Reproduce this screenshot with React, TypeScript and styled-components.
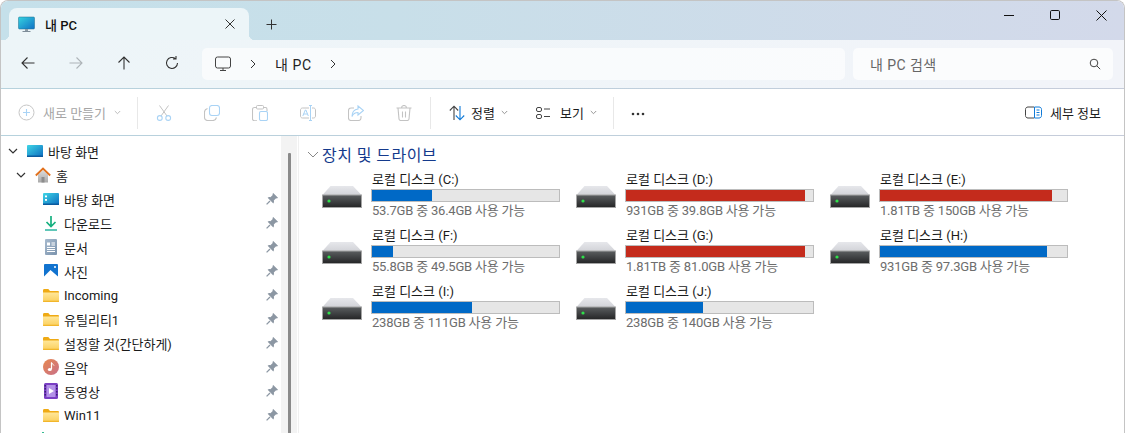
import React from "react";
import styled, { createGlobalStyle } from "styled-components";

const Global = createGlobalStyle`
  html, body { margin: 0; padding: 0; background: #fff; overflow: hidden; }
  body { font-family: Roboto, "Noto Sans CJK KR", sans-serif; color: #1a1a1a; }
`;

const Window = styled.div`
  width: 1125px; height: 433px; box-sizing: border-box; overflow: hidden;
  display: flex; flex-direction: column;
  border: 1px solid #c4c4c4; border-bottom: 0; border-radius: 8px 8px 0 0;
  background: #fff;
`;
const TitleBar = styled.div`
  height: 39px; flex: none; display: flex; align-items: flex-end;
  background: linear-gradient(90deg, #c5e0ea 0%, #c8dfe9 35%, #d3d9ea 100%);
  padding-left: 8px;
`;
const Tab = styled.div`
  position: relative; width: 240px; height: 32px; box-sizing: border-box;
  display: flex; align-items: center; padding: 0 14px 0 9px;
  background: #ecf5f8; border-radius: 8px 8px 0 0;
  &::before, &::after {
    content: ""; position: absolute; bottom: 0; width: 6px; height: 6px;
  }
  &::before { left: -6px; background: radial-gradient(circle at 0 0, transparent 6px, #ecf5f8 6.5px); }
  &::after { right: -6px; background: radial-gradient(circle at 100% 0, transparent 6px, #ecf5f8 6.5px); }
`;
const TabLabel = styled.span`
  margin-left: 10px; flex: 1; font-size: 13px; font-weight: 500; color: #111;
`;
const NewTab = styled.div`
  width: 44px; display: flex; justify-content: center; align-items: center;
  height: 32px; margin-right: auto;
`;
const Controls = styled.div`
  align-self: flex-start; display: flex; margin-left: auto;
`;
const Control = styled.div`
  width: 46px; height: 28px; display: flex; align-items: center; justify-content: center;
`;
const AddressRow = styled.div`
  height: 49px; flex: none; box-sizing: border-box; display: flex; align-items: center;
  background: linear-gradient(90deg, #edf5f8, #f2f4f9);
  border-bottom: 1px solid;
  border-image: linear-gradient(90deg, #b6d2dd, #c6ccda) 1;
  padding: 0 11px 0 3px;
`;
const NavBtn = styled.div`
  width: 48px; height: 30px; margin-bottom: 2px; flex: none; display: flex; align-items: center; justify-content: center;
`;
const AddressBox = styled.div`
  width: 643px; height: 32px; margin-left: 6px; flex: none; box-sizing: border-box;
  display: flex; align-items: center; padding-left: 13px;
  background: rgba(255,255,255,.62); border-radius: 5px;
`;
const CrumbIcon = styled.span`
  display: flex; margin-right: 17px;
`;
const Crumb = styled.span`
  font-size: 14px; color: #222; margin: 0 16px 0 17px; letter-spacing: .6px;
`;
const SearchBox = styled.div`
  width: 260px; height: 32px; margin-left: 8px; flex: none; box-sizing: border-box;
  display: flex; align-items: center; justify-content: space-between;
  padding: 0 12px 0 17px;
  background: rgba(255,255,255,.68); border-radius: 5px;
  font-size: 14px; color: #666; letter-spacing: .45px;
`;
const CommandBar = styled.div`
  height: 47px; flex: none; box-sizing: border-box; display: flex; align-items: center;
  background: #fff; border-bottom: 1px solid;
  border-image: linear-gradient(90deg, #b6d2dd, #c6ccda) 1;
  padding: 1px 23px 0 17px;
`;
const NewBtn = styled.div`
  width: 119px; flex: none; display: flex; align-items: center; gap: 8px;
  font-size: 13px; color: #a5a5a5;
`;
const Sep = styled.div`
  width: 1px; height: 32px; background: #e8e8e8; flex: none;
`;
const ToolIcons = styled.div`
  display: flex; margin: 0 2px 0 2px; flex: none;
`;
const ToolIcon = styled.div`
  width: 48px; height: 32px; display: flex; align-items: center; justify-content: center;
`;
const Menu = styled.div<{ $w: number; $pl: number; $iconGap: number }>`
  width: ${p => p.$w}px; padding-left: ${p => p.$pl}px; box-sizing: border-box; flex: none;
  display: flex; align-items: center; gap: 6px; font-size: 13px; color: #1c1c1c;
  & > svg:first-child { margin-right: ${p => p.$iconGap}px; }
`;
const Details = styled.div`
  margin-left: auto; display: flex; align-items: center; gap: 8px;
  font-size: 13px; color: #1c1c1c;
`;
const Body = styled.div`
  flex: 1; min-height: 0; display: flex; overflow: hidden;
`;
const Tree = styled.div`
  width: 280px; flex: none; padding-top: 3px; overflow: hidden;
`;
const Row = styled.div<{ $indent: number }>`
  height: 24px; display: flex; align-items: center; padding-left: ${p => p.$indent}px;
  font-size: 13px; color: #1a1a1a; white-space: nowrap; position: relative;
`;
const Chev = styled.span`
  width: 14px; flex: none; display: flex; align-items: center; justify-content: center; margin-right: 7px;
`;
const IconBox = styled.span`
  width: 16px; height: 16px; flex: none; display: flex; margin-right: 5px;
`;
const Pin = styled.span`
  position: absolute; left: 265px; top: 6px; width: 12px; height: 12px; display: flex;
`;
const Track = styled.div`
  width: 16px; flex: none; background: #f3f3f3; padding: 17px 0 0 7px; box-sizing: border-box;
`;
const Thumb = styled.div`
  width: 2.5px; height: 300px; background: #8a8a8a; border-radius: 1px;
`;
const Divider = styled.div`
  width: 1px; flex: none; margin-left: 1px; background: #f0f0f0;
`;
const Main = styled.div`
  flex: 1; padding: 8px 0 0 8px; min-width: 0;
`;
const Heading = styled.div`
  height: 19px; display: flex; align-items: center; gap: 3px;
  font-size: 16px; color: #143a8c; letter-spacing: .45px;
  margin-bottom: 8px;
`;
const Grid = styled.div`
  display: grid; grid-template-columns: repeat(3, 254px); grid-auto-rows: 48px; row-gap: 8px;
  padding-left: 15px;
`;
const Tile = styled.div`
  display: flex;
`;
const DriveBox = styled.div`
  width: 40px; height: 22px; margin-top: 15px; flex: none; display: flex;
`;
const DriveText = styled.div`
  margin-left: 9px; width: 189px; flex: none;
`;
const DriveName = styled.div`
  height: 16px; line-height: 18px; font-size: 13px; color: #1a1a1a; margin-bottom: 2px; padding-left: 1px; white-space: nowrap;
`;
const Bar = styled.div`
  height: 13px; box-sizing: border-box; border: 1px solid #bcbcbc; background: #e6e6e6;
`;
const Fill = styled.div<{ $low: boolean }>`
  height: 100%; background: ${p => (p.$low ? "#c42b1c" : "#0069c6")};
`;
const DriveSub = styled.div`
  margin-top: 1px; height: 16px; line-height: 16px; font-size: 13px; color: #6d6d6d; padding-left: 1px;
  white-space: nowrap; letter-spacing: -.2px;
`;

const S = (p: React.SVGProps<SVGSVGElement> & { s?: number }) => {
  const { s = 16, ...r } = p;
  return <svg width={s} height={s} viewBox={`0 0 ${s} ${s}`} fill="none" {...r} />;
};

const Monitor = () => (
  <S s={17} style={{ flex: "none" }}>
    <defs><linearGradient id="mon" x1="0" y1="0" x2="1" y2="1"><stop offset="0" stopColor="#35d3e0" /><stop offset="1" stopColor="#0f70c4" /></linearGradient></defs>
    <rect x=".5" y="1" width="16" height="12" rx="1" fill="url(#mon)" stroke="#1c6c8c" strokeWidth=".5" />
    <path d="M7 13h3v2H7z" fill="#8b9aa5" /><path d="M4.500 15.500h8" stroke="#7d8c98" />
  </S>
);
const Arrow = ({ d, c = "#333" }: { d: string; c?: string }) => (
  <S><path d={d} stroke={c} strokeWidth="1.1" /></S>
);
const Small = ({ d, c = "#333" }: { d: string; c?: string }) => (
  <S s={10}><path d={d} stroke={c} strokeWidth="1" /></S>
);
const Dn = ({ c = "#8a8a8a" }: { c?: string }) => (
  <S s={7} style={{ flex: "none" }}><path d="M.8 2l2.700 2.700L6.200 2" stroke={c} strokeWidth=".9" /></S>
);

const G = "#c3c3c3", B = "#a9d3f5";

const Plus = () => (
  <S s={17} style={{ flex: "none" }}><circle cx="8.500" cy="8.500" r="7.500" stroke="#c6c6c6" /><path d="M8.500 5v7M5 8.500h7" stroke={B} strokeWidth="1.1" /></S>
);
const Cut = () => (
  <S><path d="M3.500 0.500L11 11M12.500 0.500L5 11" stroke={G} /><circle cx="3.800" cy="13" r="2.400" stroke={B} strokeWidth="1.1" /><circle cx="12.200" cy="13" r="2.400" stroke={B} strokeWidth="1.1" /></S>
);
const Copy = () => (
  <S><rect x="5.500" y=".5" width="10" height="10" rx="2.500" stroke={B} strokeWidth="1.1" /><path d="M3.500 3.500C1.800 4 .5 5 .5 7v5.500c0 1.700 1.300 3 3 3H9c2 0 3-1.200 3.500-3" stroke={G} strokeWidth="1.1" /></S>
);
const Paste = () => (
  <S>
    <path d="M4 2.500H2.500c-1 0-2 .8-2 2v9.500c0 1 1 1.700 2 1.700H5M12 2.500h1.500c1 0 1.500.8 1.500 1.800V6" stroke={G} strokeWidth="1.1" />
    <rect x="4.500" y=".5" width="7" height="3.500" rx="1" stroke={G} /><rect x="7.500" y="6.500" width="8" height="9" rx="1.500" stroke={B} strokeWidth="1.1" />
  </S>
);
const Rename = () => (
  <S>
    <path d="M9 3H2.500C1.200 3 .5 4 .5 5v6c0 1.200.8 2 2 2H9M12 3h1.500c1.200 0 2 .8 2 2v6c0 1.200-.8 2-2 2H12" stroke={G} />
    <path d="M2.800 11L5.300 5h.6l2.400 6M3.600 9h3.900" stroke={B} /><path d="M9 .5h3M10.500 .5v15M9 15.500h3" stroke={B} />
  </S>
);
const Share = () => (
  <S>
    <path d="M6 3H3C1.500 3 .5 4 .5 5.500V13c0 1.500 1 2.500 2.500 2.500h7.500c1.500 0 2.500-1 2.500-2.500v-2" stroke={G} strokeWidth="1.1" />
    <path d="M10 1l5.500 4.500L10 10V7.500C7 7.500 5 9 4 11.500c0-4 2-7 6-7.500z" stroke={B} strokeWidth="1.1" />
  </S>
);
const Trash = () => (
  <S>
    <path d="M.5 3h15M5.500 3c0-1.500 1-2.500 2.500-2.500s2.500 1 2.500 2.500M2 3l1 11c.1 1 .8 1.500 1.800 1.500h6.400c1 0 1.700-.5 1.800-1.500l1-11M6.500 6.500v6M9.500 6.500v6" stroke={G} strokeWidth="1.1" />
  </S>
);
const Sort = () => (
  <S style={{ flex: "none" }}>
    <path d="M5 15V1.500M.8 5.500L5 1.200l4.200 4.300" stroke="#444" strokeWidth="1.1" />
    <path d="M11 1v13.500M6.800 10.500l4.200 4.300 4.200-4.300" stroke="#0f7ad8" strokeWidth="1.1" />
  </S>
);
const ViewIc = () => (
  <S style={{ flex: "none" }}>
    <rect x="1.500" y="2.500" width="5" height="4" rx="1.500" stroke="#444" /><rect x="1.500" y="9.500" width="5" height="4" rx="1.500" stroke="#444" />
    <path d="M9 4h6M9 11.500h6" stroke="#444" strokeWidth="1.1" />
  </S>
);
const More = () => (
  <S><circle cx="3" cy="9" r="1.300" fill="#333" /><circle cx="8" cy="9" r="1.300" fill="#333" /><circle cx="13" cy="9" r="1.300" fill="#333" /></S>
);
const Panel = () => (
  <S s={17} style={{ flex: "none" }}>
    <path d="M9 3H3C1.500 3 .5 4 .5 5.500v6C.5 13 1.500 14 3 14h6" stroke="#444" />
    <path d="M9.500 3H14c1.500 0 2.500 1 2.500 2.500v6c0 1.500-1 2.500-2.500 2.500H9.500z" stroke="#0f7ad8" />
    <path d="M11.500 6h3M11.500 8.500h3M11.500 11h3" stroke="#0f7ad8" />
  </S>
);

const DesktopIc = ({ id }: { id: string }) => (
  <S>
    <defs><linearGradient id={id} x1="0" y1="0" x2="1" y2="1"><stop offset="0" stopColor="#3fd6e6" /><stop offset="1" stopColor="#0c6cc0" /></linearGradient></defs>
    <rect x="0" y="2" width="16" height="12" rx="1" fill={`url(#${id})`} />
    <rect x="0" y="12.500" width="16" height="1.500" fill="#0b5a9e" />
    {id === "d2" && <><rect x="2" y="4.500" width="2" height="1.800" fill="#fff" /><rect x="2" y="8" width="2" height="1.800" fill="#fff" /></>}
  </S>
);
const HomeIc = () => (
  <S>
    <defs><linearGradient id="hm" x1="0" y1="0" x2="0" y2="1"><stop offset="0" stopColor="#dcdcdc" /><stop offset="1" stopColor="#a9a9a9" /></linearGradient></defs>
    <path d="M3 7.500L8 3l5 4.500V15.500H3z" fill="url(#hm)" /><rect x="6.500" y="10" width="3" height="5.500" fill="#8d8d8d" />
    <path d="M.8 8.500L8 1.500l7.200 7" stroke="#e2711d" strokeWidth="1.800" />
  </S>
);
const DownIc = () => (
  <S><path d="M8 1v9.500M3.500 7L8 11.500 12.500 7" stroke="#15b07f" strokeWidth="1.700" /><path d="M2 15h12" stroke="#2bb5a0" strokeWidth="1.600" /></S>
);
const DocIc = () => (
  <S>
    <defs><linearGradient id="dc" x1="0" y1="0" x2="1" y2="1"><stop offset="0" stopColor="#a7bace" /><stop offset="1" stopColor="#7b93ad" /></linearGradient></defs>
    <rect x="2" y="0" width="12" height="16" rx="1" fill="url(#dc)" />
    <path d="M4 3.500h3v3H4z" fill="#fff" /><path d="M8.500 4h3.500M8.500 6h3.500M4 8.500h8M4 10.500h8M4 12.500h8" stroke="#fff" />
  </S>
);
const PicIc = () => (
  <S>
    <rect x="1" y="1" width="14" height="14" rx="1" fill="#1173cf" />
    <path d="M1 13.500L7.500 7l7.500 6.500V15H1z" fill="#fff" /><circle cx="12" cy="4" r="1" fill="#fff" />
  </S>
);
const FolderIc = ({ id }: { id: string }) => (
  <S>
    <defs><linearGradient id={id} x1="0" y1="0" x2="0" y2="1"><stop offset="0" stopColor="#ffe79a" /><stop offset="1" stopColor="#fbcf5b" /></linearGradient></defs>
    <path d="M0 3.500C0 2.700.5 2 1.300 2h4l1.700 2h7.700c.8 0 1.300.5 1.300 1.300V6H0z" fill="#efaa14" />
    <path d="M0 5.500h16v8.200c0 .8-.5 1.300-1.300 1.300H1.300C.5 15 0 14.500 0 13.700z" fill={`url(#${id})`} />
    <path d="M0 14.300h16" stroke="#f0b01e" />
  </S>
);
const MusicIc = () => (
  <S>
    <defs><linearGradient id="ms" x1="0" y1="0" x2="1" y2="1"><stop offset="0" stopColor="#e8884e" /><stop offset="1" stopColor="#c8708a" /></linearGradient></defs>
    <circle cx="8" cy="8" r="8" fill="url(#ms)" />
    <path d="M8.500 3.500v6.500" stroke="#fff" strokeWidth="1.200" /><path d="M8.500 3.500c.5 1.500 2 1.800 2.500 3" stroke="#fff" />
    <ellipse cx="6.800" cy="10.500" rx="2" ry="1.600" fill="#fff" />
  </S>
);
const VideoIc = () => (
  <S>
    <rect x="1" y="0" width="14" height="16" rx="1.500" fill="#7a3fc4" />
    <rect x="3.500" y="2" width="9" height="12" fill="#b391e8" />
    <path d="M6 5l5 3-5 3z" fill="#fff" />
    <path d="M2.200 2v12M13.800 2v12" stroke="#2f1a63" strokeWidth="1.200" strokeDasharray="1.500 1.500" />
  </S>
);
const PinIc = () => (
  <S s={12}>
    <path d="M7.200 0l4.800 4.800-1 .7-.9-.2L7.800 7.600c.4 1.100.2 2-.5 2.800L1.600 4.700c.8-.7 1.700-.9 2.800-.5l2.300-2.300-.2-.9z" fill="#8c97a3" />
    <path d="M4 8L.6 11.400" stroke="#8c97a3" strokeWidth="1.300" />
  </S>
);
const DriveIc = ({ i }: { i: number }) => (
  <svg width="40" height="22" viewBox="0 0 40 22" fill="none">
    <defs>
      <linearGradient id={`f${i}`} x1="0" y1="0" x2="0" y2="1"><stop offset="0" stopColor="#5b5e60" /><stop offset="1" stopColor="#242526" /></linearGradient>
      <linearGradient id={`t${i}`} x1="0" y1="0" x2="0" y2="1"><stop offset="0" stopColor="#e6e7eb" /><stop offset="1" stopColor="#d2d3d8" /></linearGradient>
    </defs>
    <path d="M8.500 0h22.500L39.500 9H.5z" fill={`url(#t${i})`} />
    <rect x=".5" y="9" width="39" height="12.500" fill={`url(#f${i})`} stroke="#a5a5a5" />
    <circle cx="7" cy="15" r="1.600" fill="#2fe04a" />
  </svg>
);

const drives: [string, string, string, number][] = [
  ["C", "53.7GB", "36.4GB", 1 - 36.4 / 53.7],
  ["D", "931GB", "39.8GB", 1 - 39.8 / 931],
  ["E", "1.81TB", "150GB", 1 - 150 / 1853],
  ["F", "55.8GB", "49.5GB", 1 - 49.5 / 55.8],
  ["G", "1.81TB", "81.0GB", 1 - 81 / 1853],
  ["H", "931GB", "97.3GB", 1 - 97.3 / 931],
  ["I", "238GB", "111GB", 1 - 111 / 238],
  ["J", "238GB", "140GB", 1 - 140 / 238],
];

const quick: [string, React.ReactNode][] = [
  ["바탕 화면", <DesktopIc id="d2" />],
  ["다운로드", <DownIc />],
  ["문서", <DocIc />],
  ["사진", <PicIc />],
  ["Incoming", <FolderIc id="fa" />],
  ["유틸리티1", <FolderIc id="fb" />],
  ["설정할 것(간단하게)", <FolderIc id="fc" />],
  ["음악", <MusicIc />],
  ["동영상", <VideoIc />],
  ["Win11", <FolderIc id="fd" />],
];

export default function App() {
  return (
    <Window>
      <Global />
      <TitleBar>
        <Tab>
          <Monitor />
          <TabLabel>내 PC</TabLabel>
          <S s={10}><path d="M.5.500l9 9M9.500.500l-9 9" stroke="#333" /></S>
        </Tab>
        <NewTab><S s={11}><path d="M5.500.500v10M.5 5.500h10" stroke="#333" /></S></NewTab>
        <Controls>
          <Control><S s={10}><path d="M0 5.500h10" stroke="#111" /></S></Control>
          <Control><S s={10}><rect x=".5" y=".5" width="9" height="9" rx="1.200" stroke="#111" /></S></Control>
          <Control><S s={11}><path d="M.5.500l10 10M10.500.500l-10 10" stroke="#111" /></S></Control>
        </Controls>
      </TitleBar>
      <AddressRow>
        <NavBtn><Arrow d="M14.500 8H2M7.500 2.500L2 8l5.500 5.500" /></NavBtn>
        <NavBtn><Arrow d="M1.500 8H14M8.500 2.500L14 8l-5.500 5.500" c="#aeb4b8" /></NavBtn>
        <NavBtn><Arrow d="M8 14.500V2M2.500 7.500L8 2l5.500 5.500" /></NavBtn>
        <NavBtn><Arrow d="M13.500 8A5.500 5.500 0 1 1 11.500 3.700M12 1v3h-3" /></NavBtn>
        <AddressBox>
          <CrumbIcon>
            <S><rect x=".5" y="1" width="15" height="11" rx="2" stroke="#444" /><path d="M5 14.500h6M8 12v2.500" stroke="#444" /></S>
          </CrumbIcon>
          <Small d="M3 1l4 4-4 4" />
          <Crumb>내 PC</Crumb>
          <Small d="M3 1l4 4-4 4" />
        </AddressBox>
        <SearchBox>
          내 PC 검색
          <S s={12}><circle cx="5" cy="5" r="3.800" stroke="#444" /><path d="M7.800 7.800l3.400 3.400" stroke="#444" /></S>
        </SearchBox>
      </AddressRow>
      <CommandBar>
        <NewBtn><Plus />새로 만들기<Dn c="#b5b5b5" /></NewBtn>
        <Sep />
        <ToolIcons>
          <ToolIcon><Cut /></ToolIcon>
          <ToolIcon><Copy /></ToolIcon>
          <ToolIcon><Paste /></ToolIcon>
          <ToolIcon><Rename /></ToolIcon>
          <ToolIcon><Share /></ToolIcon>
          <ToolIcon><Trash /></ToolIcon>
        </ToolIcons>
        <Sep />
        <Menu $w={89} $pl={18} $iconGap={0}><Sort />정렬<Dn /></Menu>
        <Menu $w={93} $pl={15} $iconGap={3}><ViewIc />보기<Dn /></Menu>
        <Sep />
        <ToolIcon><More /></ToolIcon>
        <Details><Panel />세부 정보</Details>
      </CommandBar>
      <Body>
        <Tree>
          <Row $indent={5}>
            <Chev><S s={10}><path d="M1 3l4 4 4-4" stroke="#333" strokeWidth="1.200" /></S></Chev>
            <IconBox><DesktopIc id="d1" /></IconBox>바탕 화면
          </Row>
          <Row $indent={13}>
            <Chev><S s={10}><path d="M1 3l4 4 4-4" stroke="#333" strokeWidth="1.200" /></S></Chev>
            <IconBox><HomeIc /></IconBox>홈
          </Row>
          {quick.map(([t, ic]) => (
            <Row $indent={42} key={t}>
              <IconBox>{ic}</IconBox>{t}<Pin><PinIc /></Pin>
            </Row>
          ))}
          <Row $indent={34}><IconBox><DownIc /></IconBox></Row>
        </Tree>
        <Track><Thumb /></Track>
        <Divider />
        <Main>
          <Heading>
            <S s={12}><path d="M1 4l5 5 5-5" stroke="#888" /></S>
            장치 및 드라이브
          </Heading>
          <Grid>
            {drives.map(([l, total, free, used], i) => (
              <Tile key={l}>
                <DriveBox><DriveIc i={i} /></DriveBox>
                <DriveText>
                  <DriveName>로컬 디스크 ({l}:)</DriveName>
                  <Bar><Fill $low={used > 0.9} style={{ width: `${used * 100}%` }} /></Bar>
                  <DriveSub>{total} 중 {free} 사용 가능</DriveSub>
                </DriveText>
              </Tile>
            ))}
          </Grid>
        </Main>
      </Body>
    </Window>
  );
}
